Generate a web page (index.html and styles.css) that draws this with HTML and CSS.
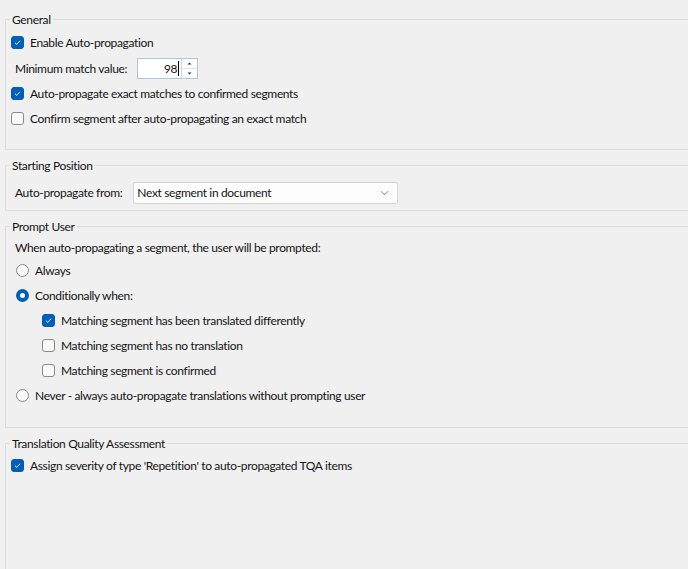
FILE: index.html
```html
<!DOCTYPE html>
<html>
<head>
<meta charset="utf-8">
<link rel="stylesheet" href="styles.css">
</head>
<body>
<fieldset class="group g-general">
  <legend>General</legend>
  <div class="row"><span class="cb on"><svg viewBox="0 0 13 13"><path d="M3.6 6.8 L5.6 8.7 L9.5 4.4" fill="none" stroke="#fff" stroke-width="1.1"/></svg></span><span class="lbl">Enable Auto-propagation</span></div>
  <div class="row r26 indent-label">
    <span class="plain">Minimum match value:</span>
    <div class="spin">
      <div class="spin-val">98<span class="caret"></span></div>
      <div class="spin-btns">
        <span class="sb"><svg viewBox="0 0 15 9"><path d="M5.5 5.5 L7.5 3.5 L9.5 5.5 Z" fill="#333"/></svg></span>
        <span class="sb"><svg viewBox="0 0 15 9"><path d="M5.5 3.5 L7.5 5.5 L9.5 3.5 Z" fill="#333"/></svg></span>
      </div>
    </div>
  </div>
  <div class="row"><span class="cb on"><svg viewBox="0 0 13 13"><path d="M3.6 6.8 L5.6 8.7 L9.5 4.4" fill="none" stroke="#fff" stroke-width="1.1"/></svg></span><span class="lbl">Auto-propagate exact matches to confirmed segments</span></div>
  <div class="row"><span class="cb"></span><span class="lbl">Confirm segment after auto-propagating an exact match</span></div>
</fieldset>

<fieldset class="group g-start">
  <legend>Starting Position</legend>
  <div class="row indent-label">
    <span class="plain">Auto-propagate from:</span>
    <div class="combo">
      <span>Next segment in document</span>
      <svg class="chev" viewBox="0 0 10 6"><path d="M1 1 L5 5 L9 1" fill="none" stroke="#777" stroke-width="1"/></svg>
    </div>
  </div>
</fieldset>

<fieldset class="group g-prompt">
  <legend>Prompt User</legend>
  <div class="row r22 indent-label"><span class="plain">When auto-propagating a segment, the user will be prompted:</span></div>
  <div class="row radio-row"><span class="rd"></span><span class="lbl">Always</span></div>
  <div class="row radio-row"><span class="rd on"></span><span class="lbl">Conditionally when:</span></div>
  <div class="row sub"><span class="cb on"><svg viewBox="0 0 13 13"><path d="M3.6 6.8 L5.6 8.7 L9.5 4.4" fill="none" stroke="#fff" stroke-width="1.1"/></svg></span><span class="lbl">Matching segment has been translated differently</span></div>
  <div class="row sub"><span class="cb"></span><span class="lbl">Matching segment has no translation</span></div>
  <div class="row sub"><span class="cb"></span><span class="lbl">Matching segment is confirmed</span></div>
  <div class="row radio-row"><span class="rd"></span><span class="lbl">Never - always auto-propagate translations without prompting user</span></div>
</fieldset>

<fieldset class="group g-tqa">
  <legend>Translation Quality Assessment</legend>
  <div class="row"><span class="cb on"><svg viewBox="0 0 13 13"><path d="M3.6 6.8 L5.6 8.7 L9.5 4.4" fill="none" stroke="#fff" stroke-width="1.1"/></svg></span><span class="lbl">Assign severity of type 'Repetition' to auto-propagated TQA items</span></div>
</fieldset>
</body>
</html>
```

FILE: styles.css
```css
html, body {
  margin: 0;
  padding: 0;
  background: #f0f0f0;
  height: 100%;
  overflow: hidden;
}
body {
  font-family: Lato, "Noto Sans", sans-serif;
  font-size: 12px;
  letter-spacing: -0.35px;
  color: #141414;
}
.group {
  margin: 7px 0 0 5px;
  padding: 0 0 0 5px;
  border: 1px solid #dcdcdc;
  border-right: none;
  min-width: 0;
}
.group legend {
  margin-left: -1px;
  padding: 0 2px;
  line-height: 16px;
  height: 16px;
  position: relative;
  top: 1px;
}
.g-general { margin-top: 11px; padding-top: 3px; padding-bottom: 18px; }
.g-start { padding-top: 7px; padding-bottom: 5px; }
.g-prompt { padding-top: 2px; padding-bottom: 19px; }
.g-tqa { padding-top: 2px; height: 140px; border-bottom: none; }

.row {
  display: flex;
  align-items: center;
  height: 25px;
}
.r26 { height: 26px; }
.r22 { height: 22px; }
.indent-label { padding-left: 4px; }
.radio-row { padding-left: 5px; }
.sub { padding-left: 31px; }

.cb {
  width: 13px;
  height: 13px;
  box-sizing: border-box;
  border: 1px solid #8a8a8a;
  border-radius: 3px;
  background: #f9f9f9;
  flex: none;
  display: flex;
}
.cb.on {
  background: #005fb8;
  border-color: #005fb8;
}
.cb svg { width: 100%; height: 100%; }
.lbl { margin-left: 6px; white-space: nowrap; }
.plain { white-space: nowrap; }

.rd {
  width: 13px;
  height: 13px;
  box-sizing: border-box;
  border: 1px solid #8a8a8a;
  border-radius: 50%;
  background: #f9f9f9;
  flex: none;
}
.rd.on {
  border: 4px solid #005fb8;
  background: #fff;
}

.spin {
  margin-left: 10px;
  display: flex;
  width: 61px;
  height: 21px;
  box-sizing: border-box;
  border: 1px solid #a9c6e6;
  background: #fff;
}
.spin-val {
  flex: 1;
  display: flex;
  align-items: center;
  justify-content: flex-end;
  padding-right: 2px;
  border-right: 1px solid #c8d8ea;
}
.caret {
  display: inline-block;
  width: 1px;
  height: 15px;
  background: #000;
  margin-left: 1px;
}
.spin-btns {
  width: 15px;
  display: flex;
  flex-direction: column;
}
.sb { flex: 1; display: flex; }
.sb + .sb { border-top: 1px solid #dde6f0; }
.sb svg { width: 15px; height: 9px; }

.combo {
  margin-left: 11px;
  width: 265px;
  height: 22px;
  box-sizing: border-box;
  border: 1px solid #d4d4d4;
  border-radius: 2px;
  background: #fdfdfd;
  display: flex;
  align-items: center;
  padding-left: 3px;
  padding-right: 8px;
}
.combo span { flex: 1; }
.chev { width: 9px; height: 6px; }
```
